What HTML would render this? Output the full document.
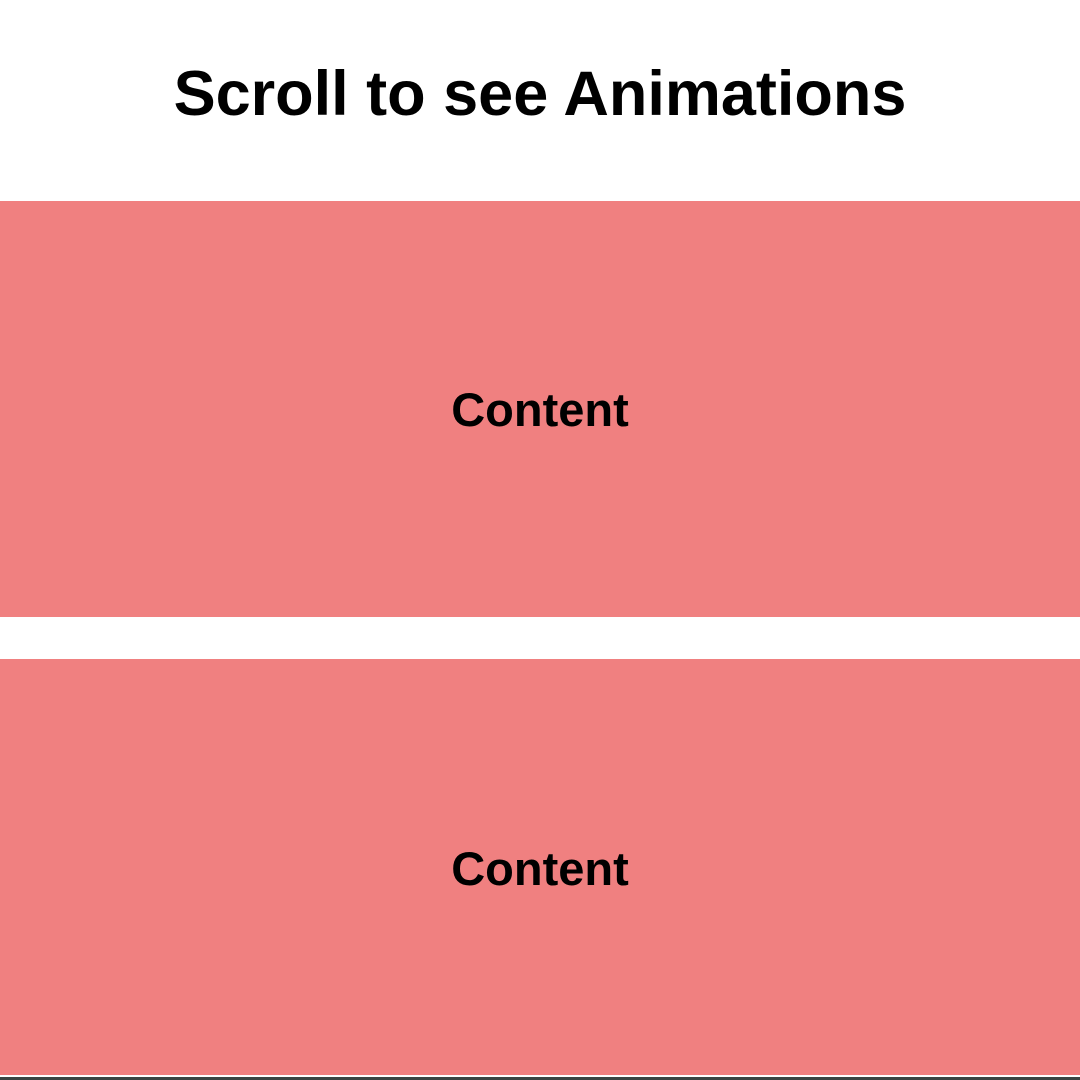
<!DOCTYPE html>
<html><head><style>
html,body{margin:0;padding:0;width:1080px;height:1080px;overflow:hidden;background:#fff;font-family:"Liberation Sans",sans-serif;}
h1{position:absolute;left:0;width:1080px;margin:0;text-align:center;font-size:63px;font-weight:bold;line-height:64px;top:62px;color:#000}
.box{position:absolute;left:0;width:1080px;background:#F08080;display:flex;align-items:center;justify-content:center;font-size:47px;font-weight:bold;color:#000}
.line{position:absolute;left:0;width:1080px;top:1077px;height:3px;background:#3a4443}
</style></head><body>
<h1>Scroll to see Animations</h1>
<div class="box" style="top:201px;height:416px">Content</div>
<div class="box" style="top:659px;height:416px;padding-top:2px;box-sizing:border-box">Content</div>
<div class="line"></div>
</body></html>
